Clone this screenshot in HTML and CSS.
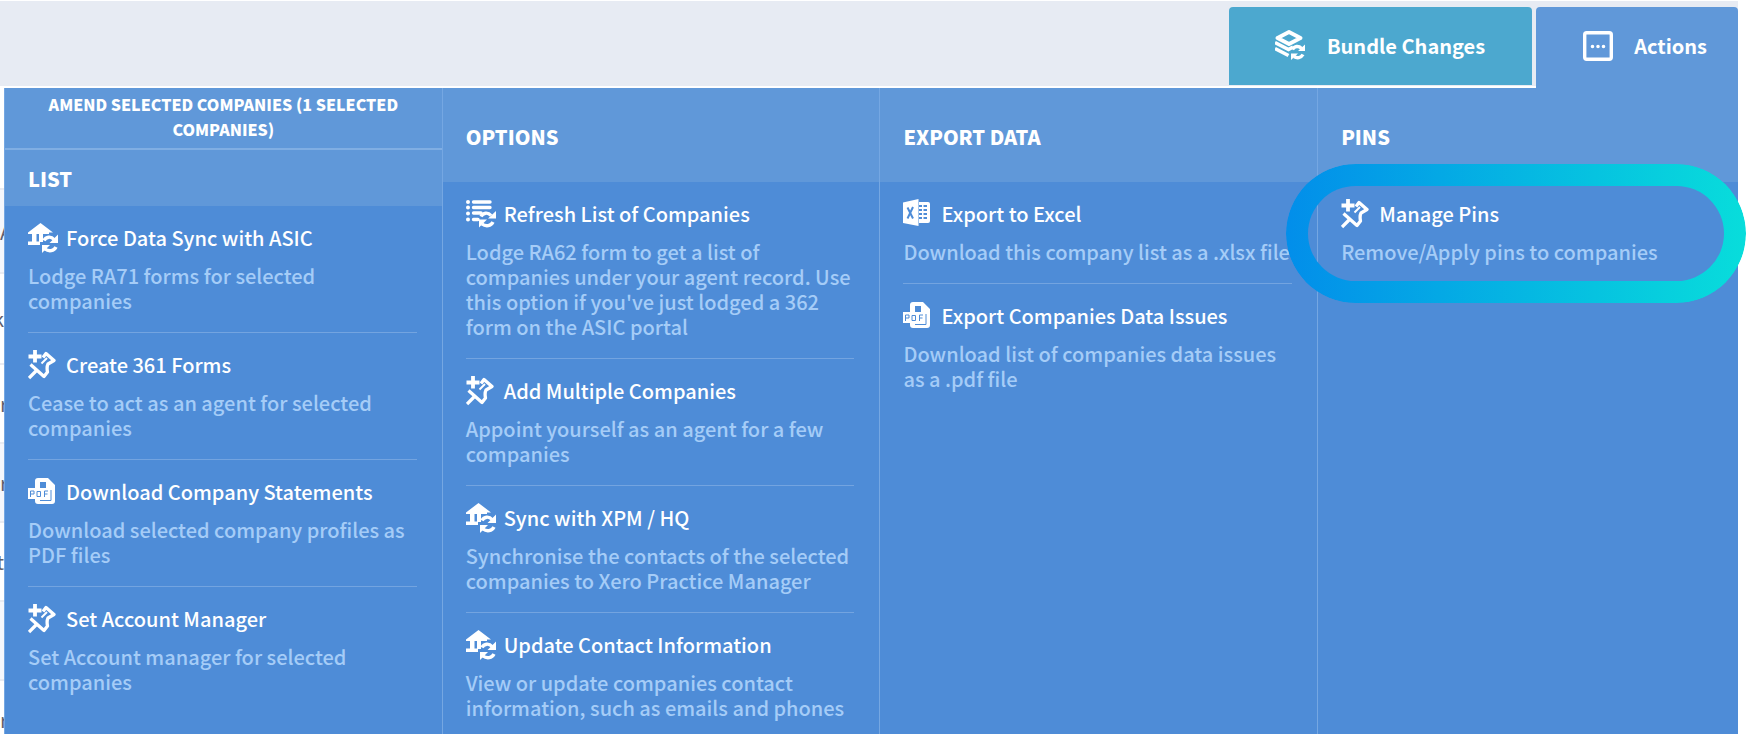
FILE: index.html
```
<!DOCTYPE html>
<html lang="en">
<head>
    <meta charset="UTF-8">
    <meta name="viewport" content="width=device-width, initial-scale=1.0">
    <title>Companies - Actions</title>
    <link rel="stylesheet" href="styles.css">
</head>
<body>
    <!-- shared icons -->
    <svg class="sprite" aria-hidden="true">
        <symbol id="icon-sync" viewBox="0 0 30 30">
            <path fill="currentColor" d="M12.500 0L25 9.500H21V11H0V9.500zM4 10h4.500v9H4zM11 10h4v9H11zM0 18.500h12V22H0z"/>
            <path fill="none" stroke="currentColor" stroke-width="3.400" d="M16 17.500c2-4 7-4.500 10-1M28 24c-2 4-7 5-11 2"/>
            <path fill="currentColor" d="M30 11.500V20h-8.500zM14 30v-8h8z"/>
        </symbol>
        <symbol id="icon-pin" viewBox="0 0 30 30">
            <path fill="none" stroke="currentColor" stroke-width="3.800" d="M7 0v12.500M.5 6.500h13"/>
            <path fill="none" stroke="currentColor" stroke-width="3.300" stroke-linejoin="round" d="M15 7.500L18 3.500L26 10.500L20 14Q18.500 17 19.500 22L16 26.500L2.500 14.500M8.500 20.500L1 28"/>
            <path fill="none" stroke="currentColor" stroke-width="2" d="M19 8L13.500 13.500"/>
        </symbol>
        <symbol id="icon-pdf" viewBox="0 0 30 30">
            <path fill="currentColor" fill-rule="evenodd" d="M10 1h10l7 7v16q0 3-3 3H10q-3 0-3-3v-2H0V11h7V4q0-3 3-3zM12 5v6h6V5z"/>
            <path fill="none" stroke="#4e8cd7" stroke-width="1" d="M2.500 20v-6H6v3H3M9 14.500v5h3.500v-5zM16.500 20v-6H20M17 17h2.500M12 23.500h11V13"/>
        </symbol>
        <symbol id="icon-list" viewBox="0 0 30 30">
            <path fill="none" stroke="currentColor" stroke-width="3.400" stroke-linecap="round" d="M7.500 3H24M7.500 8.500H24M7.500 14H15M7.500 20.500H12"/>
            <path fill="none" stroke="currentColor" stroke-width="4" stroke-linecap="round" d="M2 3h0M2 8.500h0M2 14.500h0M2 20.500h0"/>
            <path fill="none" stroke="currentColor" stroke-width="3.400" d="M15 17.500c2-4 7-4.500 10-1M27 23c-2 4-7 5-11 2"/>
            <path fill="currentColor" d="M30 12v7.500h-8zM13 28.500v-8h8z"/>
        </symbol>
        <symbol id="icon-excel" viewBox="0 0 30 30">
            <path fill="currentColor" d="M0 3.500L15.500 0v27L0 24z"/>
            <path fill="none" stroke="#4e8cd7" stroke-width="2" d="M4.500 8.500l5.500 11M10 8L4.500 19.500"/>
            <path fill="currentColor" fill-rule="evenodd" d="M16 3h9q2 0 2 2v17q0 2-2 2h-9zM16 6v2h3V6zM20.500 6v2H24V6zM16 10v2h3v-2zM20.500 10v2H24v-2zM16 14v2h3v-2zM20.500 14v2H24v-2zM16 18v2h3v-2zM20.500 18v2H24v-2z"/>
        </symbol>
        <symbol id="icon-bundle" viewBox="0 0 30 30">
            <path fill="none" stroke="currentColor" stroke-width="3.800" stroke-linejoin="round" d="M2.500 8L14 2L25.500 8L14 14z"/>
            <path fill="none" stroke="currentColor" stroke-width="3.600" d="M0 12.500L13.500 19.500L18 17M0 18.500L13.500 25.500"/>
            <path fill="none" stroke="currentColor" stroke-width="3.400" d="M17.500 19.500c2-3.500 6-4 9-1M28 24.500c-2 3.500-6 4-9 2"/>
            <path fill="currentColor" d="M30 14.500V21h-7zM16 30v-6.500h7z"/>
        </symbol>
        <symbol id="icon-actions" viewBox="0 0 30 30">
            <rect x="1.700" y="1.700" width="26.600" height="26.600" rx="2" fill="none" stroke="currentColor" stroke-width="3.400"/>
            <path fill="none" stroke="currentColor" stroke-width="3.600" stroke-linecap="round" d="M9.500 15.500h0M15 15.500h0M20.500 15.500h0"/>
        </symbol>
    </svg>

    <div class="toolbar">
        <button type="button" class="tab tab-bundle"><svg><use href="#icon-bundle"/></svg>Bundle Changes</button>
        <button type="button" class="tab tab-actions"><svg><use href="#icon-actions"/></svg>Actions</button>
    </div>

    <div class="content">
        <!-- company list, covered by the menu -->
        <div class="companies">
            <div class="company head"></div>
            <div class="company tall shade">A</div>
            <div class="company middle end">k</div>
            <div class="company">r</div>
            <div class="company shade">r</div>
            <div class="company end">ct</div>
            <div class="company shade"></div>
            <div class="company">r</div>
        </div>

        <div class="menu">
            <section class="column">
                <p class="selected">AMEND SELECTED COMPANIES (1 SELECTED COMPANIES)</p>
                <h2 class="short">LIST</h2>
                <ul>
                    <li>
                        <a href="#"><svg><use href="#icon-sync"/></svg>Force Data Sync with ASIC</a>
                        <p>Lodge RA71 forms for selected companies</p>
                    </li>
                    <li>
                        <a href="#"><svg><use href="#icon-pin"/></svg>Create 361 Forms</a>
                        <p>Cease to act as an agent for selected companies</p>
                    </li>
                    <li>
                        <a href="#"><svg><use href="#icon-pdf"/></svg>Download Company Statements</a>
                        <p>Download selected company profiles as PDF files</p>
                    </li>
                    <li>
                        <a href="#"><svg><use href="#icon-pin"/></svg>Set Account Manager</a>
                        <p>Set Account manager for selected companies</p>
                    </li>
                </ul>
            </section>
            <section class="column">
                <h2>OPTIONS</h2>
                <ul>
                    <li>
                        <a href="#"><svg><use href="#icon-list"/></svg>Refresh List of Companies</a>
                        <p>Lodge RA62 form to get a list of companies under your agent record. Use this option if you've just lodged a 362 form on the ASIC portal</p>
                    </li>
                    <li>
                        <a href="#"><svg><use href="#icon-pin"/></svg>Add Multiple Companies</a>
                        <p>Appoint yourself as an agent for a few companies</p>
                    </li>
                    <li>
                        <a href="#"><svg><use href="#icon-sync"/></svg>Sync with XPM / HQ</a>
                        <p>Synchronise the contacts of the selected companies to Xero Practice Manager</p>
                    </li>
                    <li>
                        <a href="#"><svg><use href="#icon-sync"/></svg>Update Contact Information</a>
                        <p>View or update companies contact information, such as emails and phones</p>
                    </li>
                </ul>
            </section>
            <section class="column">
                <h2>EXPORT DATA</h2>
                <ul>
                    <li>
                        <a href="#"><svg><use href="#icon-excel"/></svg>Export to Excel</a>
                        <p>Download this company list as a .xlsx file</p>
                    </li>
                    <li>
                        <a href="#"><svg><use href="#icon-pdf"/></svg>Export Companies Data Issues</a>
                        <p>Download list of companies data issues as a .pdf file</p>
                    </li>
                </ul>
            </section>
            <section class="column">
                <h2>PINS</h2>
                <ul class="highlight">
                    <li>
                        <a href="#"><svg><use href="#icon-pin"/></svg>Manage Pins</a>
                        <p>Remove/Apply pins to companies</p>
                    </li>
                </ul>
            </section>
        </div>
    </div>
</body>
</html>
```

FILE: styles.css
```
* {
    box-sizing: border-box;
}

body {
    font-family: "Noto Sans CJK SC", "Noto Sans", sans-serif;
    font-size: 20px;
    background-color: #fff;
    margin: 0;
    display: flex;
    flex-direction: column;
    height: 100vh;
    overflow: hidden;
}

h2, p, ul {
    margin: 0;
    padding: 0;
}

.sprite {
    display: none;
}

/* top bar */
.toolbar {
    display: flex;
    justify-content: flex-end;
    gap: 4px;
    height: 85px;
    flex-shrink: 0;
    margin: 1px 8px 2px 0;
    padding-top: 6px;
    background-color: #e7ebf3;
}

.tab {
    display: flex;
    align-items: center;
    border: none;
    border-radius: 4px 4px 0 0;
    color: #fff;
    font-family: inherit;
    font-size: 20px;
    font-weight: bold;
    cursor: pointer;
}

.tab svg {
    width: 30px;
    height: 30px;
}

.tab-bundle {
    height: 78px;
    gap: 22px;
    padding: 0 47px 2px 46px;
    background-color: #4ca8cf;
}

.tab-actions {
    height: 81px;
    gap: 21px;
    padding: 0 31px 4px 47px;
    background-color: #6098d9;
}

.content {
    display: flex;
    flex: 1;
    min-height: 0;
    padding-right: 8px;
}

/* company list */
.companies {
    width: 4px;
    overflow: hidden;
    color: #5f5f6e;
}

.company {
    display: flex;
    align-items: center;
    height: 79px;
    border-bottom: 2px solid #e9ebf1;
}

.company.head {
    height: 102px;
}

.company.tall {
    height: 84px;
}

.company.middle {
    height: 91px;
}

.company.shade {
    background-color: #f5f7fc;
}

.company.end {
    justify-content: flex-end;
}

/* actions menu */
.menu {
    flex: 1;
    display: grid;
    grid-template-columns: 26fr 26fr 26fr 25fr;
    background-color: #4e8cd7;
    color: #fff;
}

.column {
    border-left: 1px solid #75a7e2;
}

.selected {
    padding: 4px 24px 6px;
    border-bottom: 2px solid #80aee3;
    background-color: #6098d9;
    font-size: 16px;
    font-weight: 900;
    line-height: 25px;
    text-align: center;
}

h2 {
    height: 94px;
    padding: 0 23px;
    background-color: #6098d9;
    font-size: 20px;
    font-weight: 900;
    line-height: 98px;
}

h2.short {
    height: 56px;
    line-height: 58px;
}

ul {
    list-style: none;
    padding: 0 25px 0 23px;
}

li {
    padding: 18px 0 19px;
    border-bottom: 1px solid #73a4e0;
}

li:last-child {
    border-bottom: none;
}

li a {
    display: flex;
    align-items: center;
    gap: 8px;
    margin-bottom: 11px;
    color: #fff;
    font-weight: 500;
    line-height: 28px;
    text-decoration: none;
}

li svg {
    width: 30px;
    height: 30px;
    margin: -1px 0;
}

li p {
    color: #a5ccf7;
    font-weight: 500;
    line-height: 25px;
}

/* ring around the pins entry */
.highlight {
    position: relative;
}

.highlight::after {
    content: "";
    position: absolute;
    box-sizing: border-box;
    top: -18px;
    left: -32px;
    right: -8px;
    height: 139px;
    padding: 0;
    border: 22px solid transparent;
    border-radius: 70px;
    background: linear-gradient(to right, #028eea, #08dddb) border-box;
    mask: linear-gradient(#000 0 0) padding-box exclude, linear-gradient(#000 0 0) border-box;
    pointer-events: none;
}
```
